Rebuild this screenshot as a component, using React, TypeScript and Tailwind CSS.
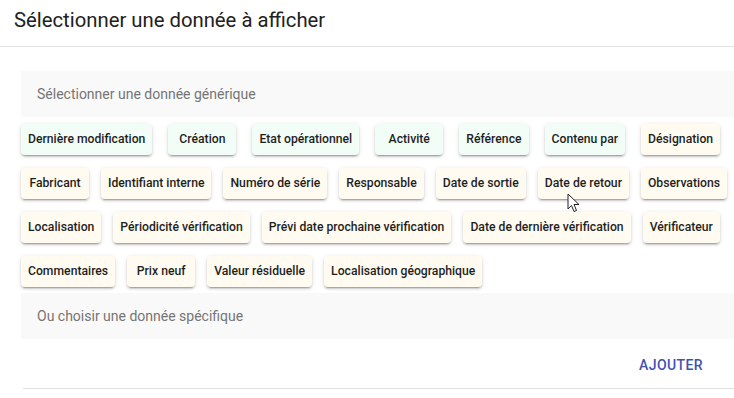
const GENERIC = [
	"Dernière modification",
	"Création",
	"Etat opérationnel",
	"Activité",
	"Référence",
	"Contenu par",
]

const SPECIFIC = [
	"Désignation",
	"Fabricant",
	"Identifiant interne",
	"Numéro de série",
	"Responsable",
	"Date de sortie",
	"Date de retour",
	"Observations",
	"Localisation",
	"Périodicité vérification",
	"Prévi date prochaine vérification",
	"Date de dernière vérification",
	"Vérificateur",
	"Commentaires",
	"Prix neuf",
	"Valeur résiduelle",
	"Localisation géographique",
]

const chipShadow =
	"shadow-[0_3px_1px_-2px_rgba(0,0,0,0.2),0_2px_2px_0_rgba(0,0,0,0.14),0_1px_5px_0_rgba(0,0,0,0.12)]"

function Chip({ label, generic }: { label: string; generic?: boolean }) {
	return (
		<button
			type="button"
			className={`h-[31px] min-w-[68px] rounded px-[7px] text-[12.2px] font-medium text-[#1f1f1f] ${chipShadow} ${
				generic ? "mr-4 bg-[#f2fdf8]" : "mr-3 bg-[#fffbf0]"
			}`}
		>
			{label}
		</button>
	)
}

function Cursor() {
	return (
		<svg className="absolute left-[567px] top-[193px]" width="13" height="20" viewBox="0 0 13 20">
			<path
				d="M1 1 L1 16 L4.5 12.5 L7 18.5 L9.5 17.5 L7 11.5 L12 11.5 Z"
				fill="#fff"
				stroke="#222"
				strokeWidth="1"
				strokeLinejoin="round"
			/>
		</svg>
	)
}

export default function App() {
	return (
		<div className="relative h-[398px] w-[734px] overflow-hidden bg-white font-['Roboto','Liberation_Sans',sans-serif]">
			<div className="h-[47px] border-b border-[#e0e0e0] px-[14px] pt-[6px]">
				<h2 className="text-[20.3px] leading-[28px] text-[#212121]">Sélectionner une donnée à afficher</h2>
			</div>

			<div className="ml-[21px] w-[740px] pt-[24px]">
				<div className="flex h-[46px] items-center bg-[#f9f9f9] pl-4 text-[14px] text-[#757575]">
					Sélectionner une donnée générique
				</div>

				<div className="mt-[7px] flex flex-wrap gap-y-[13px]">
					{GENERIC.map((label) => (
						<Chip key={label} label={label} generic />
					))}
					{SPECIFIC.map((label) => (
						<Chip key={label} label={label} />
					))}
				</div>

				<div className="mt-[6px] flex h-[46px] items-center bg-[#f9f9f9] pl-4 text-[14px] text-[#757575]">
					Ou choisir une donnée spécifique
				</div>
			</div>

			<div className="flex h-[49px] items-center justify-end pr-[19px] pt-[3px]">
				<button
					type="button"
					className="rounded px-3 py-[6px] text-[14px] font-medium uppercase tracking-[0.4px] text-[#3f51b5]"
				>
					Ajouter
				</button>
			</div>
			<div className="ml-[23px] border-t border-[#e0e0e0]" />

			<Cursor />
		</div>
	)
}
